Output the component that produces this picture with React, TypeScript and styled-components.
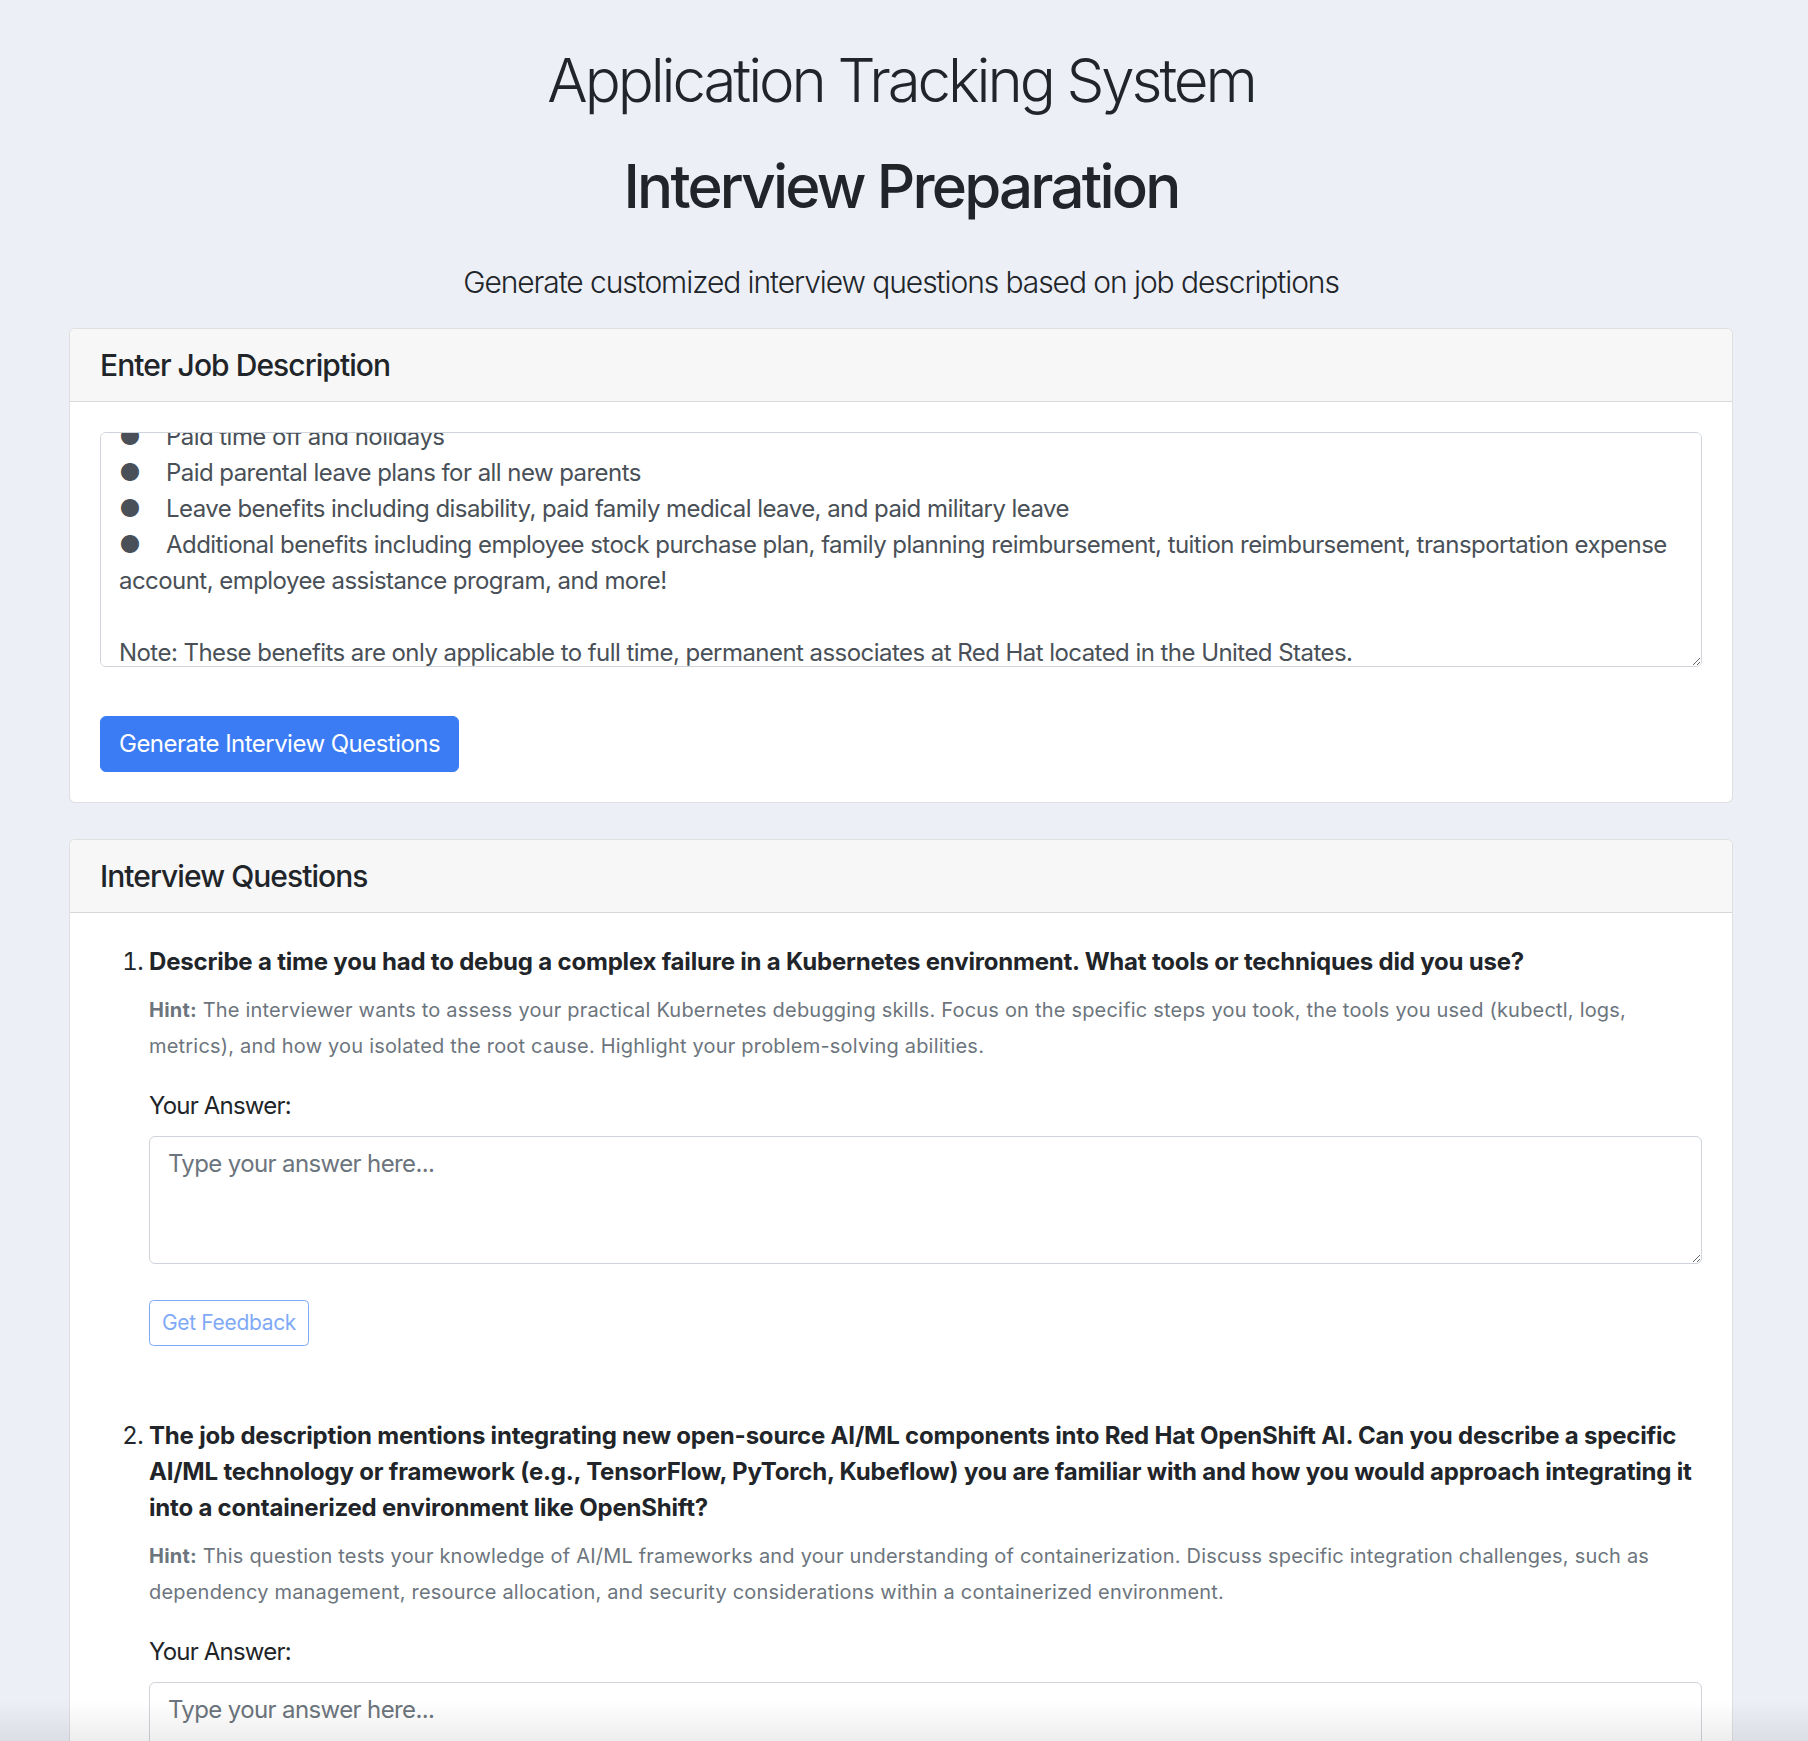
import React, { useEffect, useRef } from 'react';
import styled, { createGlobalStyle } from 'styled-components';

const GlobalStyle = createGlobalStyle`
  *, *::before, *::after { box-sizing: border-box; }
  html, body { margin: 0; padding: 0; }
  body {
    background: #eceff6;
    font-family: Inter, "Liberation Sans", sans-serif;
    font-size: 24px;
    line-height: 36px;
    letter-spacing: -0.55px;
    color: #212529;
  }
`;

const Page = styled.main`
  padding: 44px 75px 40px 69px;
`;

const Title = styled.h1`
  margin: 0;
  font-size: 60px;
  font-weight: 300;
  line-height: 72px;
  letter-spacing: -3.1px;
  text-align: center;
`;

const Heading = styled.h2`
  margin: 34px 0 0;
  font-size: 60px;
  font-weight: 500;
  line-height: 72px;
  letter-spacing: -2.8px;
  text-align: center;
`;

const Lead = styled.p`
  margin: 38px 0 23px;
  font-size: 30px;
  font-weight: 300;
  line-height: 45px;
  letter-spacing: -1.07px;
  text-align: center;
`;

const Card = styled.section`
  background: #fff;
  border: 1px solid rgba(0, 0, 0, 0.125);
  border-radius: 6px;
  overflow: hidden;
  margin-bottom: 36px;
`;

const CardHeader = styled.header`
  background: #f7f7f7;
  border-bottom: 1px solid rgba(0, 0, 0, 0.125);
  padding: 18px 30px;
`;

const CardTitle = styled.h5`
  margin: 0;
  font-size: 30px;
  font-weight: 500;
  line-height: 36px;
  letter-spacing: -0.95px;
`;

const CardBody = styled.div`
  padding: 30px;
`;

const TextArea = styled.textarea<{ $h: number }>`
  display: block;
  width: 100%;
  height: ${(p) => p.$h}px;
  padding: 9px 18px;
  font-family: inherit;
  font-size: 24px;
  line-height: 36px;
  letter-spacing: -0.55px;
  color: #495057;
  background: #fff;
  border: 1px solid #ced4da;
  border-radius: 6px;
  tab-size: 47px;
  resize: vertical;
  outline: none;
  &::placeholder {
    color: #6c757d;
    opacity: 1;
    letter-spacing: -0.62px;
  }
`;

const PrimaryButton = styled.button`
  display: inline-block;
  margin-top: 49px;
  padding: 9px 18px;
  font-family: inherit;
  font-size: 24px;
  line-height: 36px;
  letter-spacing: -0.53px;
  color: #fff;
  background: #3b7cf4;
  border: 1px solid #3b7cf4;
  border-radius: 6px;
  cursor: pointer;
`;

const QuestionList = styled.ol`
  margin: 1px 0 0;
  padding-left: 49px;
`;

const QuestionItem = styled.li`
  margin-bottom: 72px;
`;

const QuestionText = styled.div`
  font-weight: 700;
  letter-spacing: -0.2px;
  margin-bottom: 12px;
`;

const Hint = styled.p`
  margin: 0 0 24px;
  color: #6c757d;
  font-size: 20px;
  line-height: 36px;
  letter-spacing: 0.2px;
  strong {
    font-weight: 700;
  }
`;

const Label = styled.label`
  display: block;
  margin-bottom: 12px;
  letter-spacing: -0.8px;
`;

const FeedbackButton = styled.button`
  display: inline-block;
  margin-top: 36px;
  padding: 6px 12px;
  font-family: inherit;
  font-size: 21px;
  line-height: 31.5px;
  letter-spacing: -0.33px;
  color: #3b7cf4;
  background: transparent;
  border: 1px solid #3b7cf4;
  border-radius: 4.5px;
  opacity: 0.65;
`;

const BottomShade = styled.div`
  position: fixed;
  left: 0;
  right: 0;
  bottom: 0;
  height: 40px;
  pointer-events: none;
  background: linear-gradient(to bottom, rgba(0, 0, 0, 0), rgba(0, 0, 0, 0.07));
`;

const jobText = `Benefits
●\tComprehensive medical, dental, and vision coverage
●\tFlexible Spending Account - healthcare and dependent care
●\tHealth Savings Account - high deductible medical plan
●\tRetirement 401(k) with employer match
●\tPaid time off and holidays
●\tPaid parental leave plans for all new parents
●\tLeave benefits including disability, paid family medical leave, and paid military leave
●\tAdditional benefits including employee stock purchase plan, family planning reimbursement, tuition reimbursement, transportation expense account, employee assistance program, and more!

Note: These benefits are only applicable to full time, permanent associates at Red Hat located in the United States.

Inclusion at Red Hat
Red Hat’s culture is built on the open source principles of transparency, collaboration, and inclusion, where the best ideas can come from anywhere and anyone.`;

const questions = [
  {
    q: 'Describe a time you had to debug a complex failure in a Kubernetes environment. What tools or techniques did you use?',
    hint: 'The interviewer wants to assess your practical Kubernetes debugging skills. Focus on the specific steps you took, the tools you used (kubectl, logs, metrics), and how you isolated the root cause. Highlight your problem-solving abilities.',
  },
  {
    q: 'The job description mentions integrating new open-source AI/ML components into Red Hat OpenShift AI. Can you describe a specific AI/ML technology or framework (e.g., TensorFlow, PyTorch, Kubeflow) you are familiar with and how you would approach integrating it into a containerized environment like OpenShift?',
    hint: 'This question tests your knowledge of AI/ML frameworks and your understanding of containerization. Discuss specific integration challenges, such as dependency management, resource allocation, and security considerations within a containerized environment.',
  },
];

export default function App() {
  const jobRef = useRef<HTMLTextAreaElement>(null);
  useEffect(() => {
    if (jobRef.current) jobRef.current.scrollTop = 23 + 5 * 36;
  }, []);

  return (
    <>
      <GlobalStyle />
      <Page>
        <Title>Application Tracking System</Title>
        <Heading>Interview Preparation</Heading>
        <Lead>Generate customized interview questions based on job descriptions</Lead>

        <Card>
          <CardHeader>
            <CardTitle>Enter Job Description</CardTitle>
          </CardHeader>
          <CardBody>
            <TextArea ref={jobRef} $h={235} defaultValue={jobText} />
            <PrimaryButton type="button">Generate Interview Questions</PrimaryButton>
          </CardBody>
        </Card>

        <Card>
          <CardHeader>
            <CardTitle>Interview Questions</CardTitle>
          </CardHeader>
          <CardBody>
            <QuestionList>
              {questions.map((item, i) => (
                <QuestionItem key={i}>
                  <QuestionText>{item.q}</QuestionText>
                  <Hint>
                    <strong>Hint:</strong> {item.hint}
                  </Hint>
                  <Label htmlFor={`answer-${i}`}>Your Answer:</Label>
                  <TextArea id={`answer-${i}`} $h={128} placeholder="Type your answer here..." />
                  <FeedbackButton type="button" disabled>
                    Get Feedback
                  </FeedbackButton>
                </QuestionItem>
              ))}
            </QuestionList>
          </CardBody>
        </Card>
      </Page>
      <BottomShade />
    </>
  );
}
